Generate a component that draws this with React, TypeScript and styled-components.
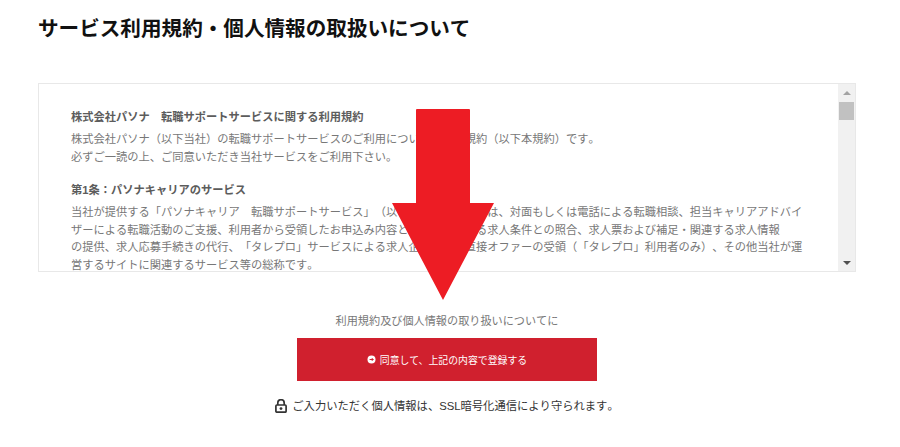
import React from "react";
import styled, { createGlobalStyle } from "styled-components";

const Global = createGlobalStyle`
  html, body { margin: 0; padding: 0; background: #fff; }
  body {
    font-family: "Liberation Sans", "Noto Sans CJK JP", sans-serif;
    text-spacing-trim: space-all;
    font-kerning: none;
  }
`;

const Page = styled.main`
  position: relative;
  width: 900px;
  height: 447px;
  overflow: hidden;
  box-sizing: border-box;
  padding: 0 44px 0 38px;
`;

const Title = styled.h1`
  margin: 0;
  padding-top: 14px;
  height: 83px;
  box-sizing: border-box;
  font-size: 20.6px;
  line-height: 29px;
  font-weight: 700;
  color: #111;
  white-space: nowrap;
`;

const TermsBox = styled.section`
  display: flex;
  height: 189px;
  box-sizing: border-box;
  border: 1px solid #e8e8e8;
  background: #fff;
`;

const TermsBody = styled.div`
  flex: 1;
  min-width: 0;
  overflow: hidden;
  padding: 25px 32px 0 32px;
  font-size: 11.25px;
  line-height: 17.5px;
  color: #777;
`;

const TermsHeading = styled.h2`
  margin: 0 0 4.5px;
  font-size: 11.25px;
  line-height: 17.5px;
  font-weight: 700;
  color: #5c5c5c;
  white-space: nowrap;
`;

const TermsText = styled.p`
  margin: 0 0 16px;
  white-space: nowrap;
`;

const Scrollbar = styled.div`
  flex: 0 0 17px;
  display: flex;
  flex-direction: column;
  align-items: center;
  background: #f1f1f1;
`;

const ScrollArrow = styled.div<{ $down?: boolean }>`
  flex: 0 0 17px;
  display: flex;
  align-items: center;
  justify-content: center;
  margin-top: ${(p) => (p.$down ? "auto" : "0")};
  &::before {
    content: "";
    border-left: 4px solid transparent;
    border-right: 4px solid transparent;
    ${(p) =>
      p.$down
        ? "border-top: 4px solid #505050;"
        : "border-bottom: 4px solid #a3a3a3;"}
  }
`;

const ScrollThumb = styled.div`
  width: 15px;
  height: 18px;
  margin-top: 1px;
  background: #c1c1c1;
`;

const Actions = styled.div`
  display: flex;
  flex-direction: column;
  align-items: center;
`;

const Caption = styled.p`
  margin: 40px 0 8px;
  font-size: 11.15px;
  line-height: 18px;
  color: #777;
  white-space: nowrap;
`;

const SubmitButton = styled.button`
  display: flex;
  align-items: center;
  justify-content: center;
  gap: 4px;
  width: 300px;
  height: 43px;
  border: 0;
  padding: 0;
  background: #d0202e;
  color: #fff;
  font-family: inherit;
  font-size: 9.9px;
  cursor: pointer;
`;

const Secure = styled.p`
  display: flex;
  align-items: center;
  gap: 5px;
  margin: 16px 0 0;
  font-size: 11.3px;
  line-height: 18px;
  color: #333;
  white-space: nowrap;
`;

const ArrowOverlay = styled.svg`
  position: absolute;
  left: 392px;
  top: 109px;
  width: 102px;
  height: 191px;
`;

export default function App() {
  return (
    <Page>
      <Global />
      <Title>サービス利用規約・個人情報の取扱いについて</Title>
      <TermsBox>
        <TermsBody>
          <TermsHeading>株式会社パソナ　転職サポートサービスに関する利用規約</TermsHeading>
          <TermsText>
            株式会社パソナ（以下当社）の転職サポートサービスのご利用についての利用規約（以下本規約）です。
            <br />
            必ずご一読の上、ご同意いただき当社サービスをご利用下さい。
          </TermsText>
          <TermsHeading>第1条：パソナキャリアのサービス</TermsHeading>
          <TermsText>
            当社が提供する「パソナキャリア　転職サポートサービス」（以下本サービス）とは、対面もしくは電話による転職相談、担当キャリアアドバイ
            <br />
            ザーによる転職活動のご支援、利用者から受領したお申込み内容と企業の提示する求人条件との照合、求人票および補足・関連する求人情報
            <br />
            の提供、求人応募手続きの代行、「タレプロ」サービスによる求人企業からの直接オファーの受領（「タレプロ」利用者のみ）、その他当社が運
            <br />
            営するサイトに関連するサービス等の総称です。
          </TermsText>
        </TermsBody>
        <Scrollbar>
          <ScrollArrow />
          <ScrollThumb />
          <ScrollArrow $down />
        </Scrollbar>
      </TermsBox>
      <Actions>
        <Caption>利用規約及び個人情報の取り扱いについてに</Caption>
        <SubmitButton type="button">
          <svg width="9" height="9" viewBox="0 0 9 9" aria-hidden="true">
            <circle cx="4.5" cy="4.5" r="4" fill="#fff" />
            <path d="M2.6 4.5h3.6M4.8 3.1l1.4 1.4-1.4 1.4" fill="none" stroke="#d0202e" strokeWidth="1" />
          </svg>
          同意して、上記の内容で登録する
        </SubmitButton>
        <Secure>
          <svg width="12" height="14" viewBox="0 0 12 14" aria-hidden="true">
            <path d="M2.8 6V3.9a3.2 3.2 0 0 1 6.4 0V6" fill="none" stroke="#333" strokeWidth="1.7" />
            <rect x="0.9" y="6" width="10.2" height="7.2" rx="1" fill="none" stroke="#333" strokeWidth="1.7" />
            <circle cx="6" cy="9.6" r="1.4" fill="#333" />
          </svg>
          ご入力いただく個人情報は、SSL暗号化通信により守られます。
        </Secure>
      </Actions>
      <ArrowOverlay viewBox="0 0 102 191" aria-hidden="true">
        <path
          d="M25 0H77a1 1 0 0 1 1 1V94H102L51 191 0 94H24V1a1 1 0 0 1 1-1z"
          fill="#ed1c24"
        />
      </ArrowOverlay>
    </Page>
  );
}
